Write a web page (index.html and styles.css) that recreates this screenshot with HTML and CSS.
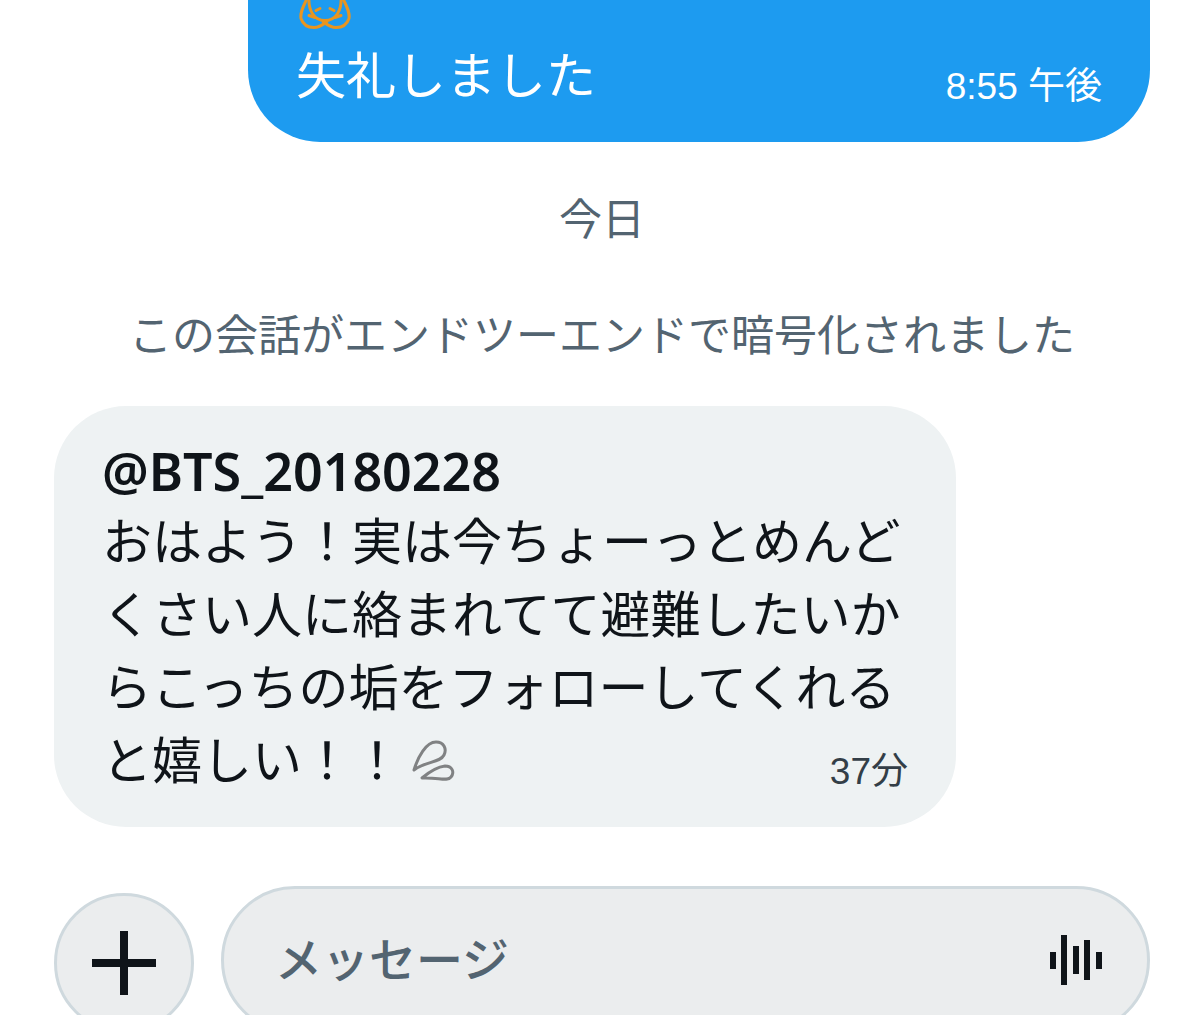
FILE: index.html
```html
<!DOCTYPE html>
<html lang="ja">
	<head>
		<meta charset="UTF-8">
		<title>メッセージ</title>
		<link rel="stylesheet" href="styles.css">
	</head>
	<body>
		<main class="chat">
			<div class="bubble sent">
				<div class="text">
					<svg class="bow" viewBox="0 0 60 40" role="img" aria-label="お辞儀">
						<path d="M13 -4C12 10 18 20 29 20S46 10 45 -4"/>
						<path d="M11 -2C7 7 4 12 5 18C7 24 12 27 18 27C25 27 28 23 31 21"/>
						<path d="M47 -2C51 7 54 12 53 18C51 24 46 27 40 27C33 27 30 23 27 21"/>
						<path d="M13 15L19 17M45 15L39 17M20 10L24 8M34 8L38 10"/>
					</svg>
					<p>失礼しました</p>
				</div>
				<time class="time">8:55 午後</time>
			</div>

			<p class="notice day">今日</p>
			<p class="notice">この会話がエンドツーエンドで暗号化されました</p>

			<div class="bubble received">
				<div class="text">
					<p class="name">@BTS_20180228</p>
					<p>おはよう！実は今ちょーっとめんどくさい人に絡まれてて避難したいからこっちの垢をフォローしてくれると嬉しい！！<svg class="dash" viewBox="0 0 50 50" role="img" aria-label="汗">
						<path d="M8 39C12 26 20 11 30 11C38 11 41 18 38 24C34 32 20 30 8 39Z"/>
						<path d="M16 47C22 42 30 36 39 35C46 35 49 41 45 46C41 51 32 46 16 47Z"/>
					</svg></p>
				</div>
				<time class="time">37分</time>
			</div>

			<form class="composer">
				<button class="add" type="button" aria-label="追加">
					<svg viewBox="0 0 64 64"><path d="M32 0V64M0 32H64"/></svg>
				</button>
				<div class="field">
					<input type="text" placeholder="メッセージ" aria-label="メッセージ">
					<button class="voice" type="button" aria-label="音声">
						<svg viewBox="0 0 52 52"><path d="M3 18V35M14 1V51M26 12V40M37 6V46M49 18V35"/></svg>
					</button>
				</div>
			</form>
		</main>
	</body>
</html>
```

FILE: styles.css
```css
* {
	box-sizing: border-box;
}

body {
	margin: 0;
	height: 100vh;
	overflow: hidden;
	background-color: #fff;
	color: #0f1419;
	font-family: "Liberation Sans", "Noto Sans CJK JP", sans-serif;
}

p {
	margin: 0;
}

svg {
	fill: none;
	stroke: currentColor;
}

.chat {
	display: flex;
	flex-direction: column;
	padding: 0 50px 0 54px;
}

/* text and time share one cell, the time sits in its lower right corner */
.bubble {
	display: grid;
	width: 902px;
	max-width: 90%;
	padding: 28px 48px;
	border-radius: 72px;
	font-size: 50px;
	line-height: 73px;
}

.text, .time {
	grid-area: 1 / 1;
}

.time {
	align-self: end;
	justify-self: end;
	font-size: 37px;
	line-height: 54px;
}

.sent {
	align-self: flex-end;
	padding-top: 0;
	border-top-left-radius: 0;
	border-top-right-radius: 0;
	background-color: #1d9bf0;
	color: #fff;
}

.received {
	margin-top: 40px;
	background-color: #eef2f3;
}

.received .time {
	color: #333e47;
}

.name {
	font-family: "Noto Sans", "Liberation Sans", sans-serif;
	font-size: 52px;
	font-weight: 600;
}

.bow {
	display: block;
	width: 60px;
	height: 41px;
	overflow: visible;
	color: #e8951f;
	stroke-width: 3;
	stroke-linecap: round;
}

.dash {
	width: 50px;
	height: 50px;
	margin-left: 4px;
	overflow: visible;
	vertical-align: -2px;
	color: #808283;
	stroke-width: 3;
	stroke-linejoin: round;
}

.notice {
	color: #536471;
	font-size: 43px;
	line-height: 60px;
	text-align: center;
}

.day {
	margin: 48px 0 56px;
}

.composer {
	display: flex;
	align-items: center;
	gap: 27px;
	margin-top: 59px;
}

.add, .field {
	border: 3px solid #cfd9de;
	background-color: #ebedee;
}

.add {
	display: flex;
	align-items: center;
	justify-content: center;
	flex: none;
	width: 140px;
	height: 140px;
	margin-top: 6px;
	padding: 0;
	border-radius: 50%;
	color: #0f1419;
}

.add svg {
	width: 64px;
	height: 64px;
	stroke-width: 8;
}

.field {
	display: flex;
	align-items: center;
	flex: 1;
	min-width: 0;
	height: 148px;
	padding: 0 45px 0 51px;
	border-radius: 74px;
}

.field input {
	flex: 1;
	min-width: 0;
	padding: 0;
	border: none;
	outline: none;
	background: none;
	color: #0f1419;
	font-family: inherit;
	font-size: 47px;
	font-weight: 500;
}

.field input::placeholder {
	color: #536471;
	opacity: 1;
}

.voice {
	padding: 0;
	border: none;
	background: none;
	color: #0f1419;
}

.voice svg {
	display: block;
	width: 52px;
	height: 52px;
	stroke-width: 6;
}
```
